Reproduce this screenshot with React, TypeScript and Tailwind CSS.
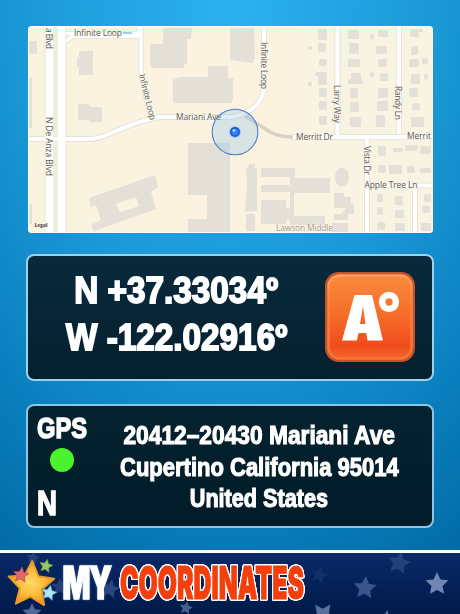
interface StarProps {
  x: number;
  y: number;
  size: number;
  fill: string;
  rotate?: number;
  opacity?: number;
  stroke?: string;
}

const Star = ({ x, y, size, fill, rotate = 0, opacity = 1, stroke }: StarProps) => (
  <path
    d="M0 -10 L2.9 -3.8 L9.5 -3.1 L4.6 1.6 L5.9 8.1 L0 4.9 L-5.9 8.1 L-4.6 1.6 L-9.5 -3.1 L-2.9 -3.8 Z"
    transform={`translate(${x} ${y}) rotate(${rotate}) scale(${size / 10})`}
    fill={fill}
    opacity={opacity}
    stroke={stroke}
    strokeWidth={0.8}
    strokeLinejoin="round"
  />
);

const buildings = [
  "M28 41h9v13h-9z M28 78h4v50h-4z M28 204h4v20h-4z",
  "M79 51h14v24H79v-8h-2v-10h2z",
  "M78 104h10l3 3h11v15h-13v-2H78z",
  "M163 28h29l-1 11h-4v25h-3v4h-32l-2-3V44h13z",
  "M230 28h24l1 30-2 5-23-3z",
  "M208 66h20v12h5v22l-2 3h-56l-2-2V80l6-3h29z",
  "M188 143h42v89h-42v-13h19v-24h-19z",
  "M250 164h5v5h2v42l-12 1 2-28-1-15z M246 214h9v17h-9z",
  "M261 168h34v9h-34z M261 185h34v7h-34z M261 200h25v8h8v12h-8v4h-25z M290 168h4v56h-4z",
  "M290 178h40v15h-40z M290 216h35v9h-35z",
  "M334 193h10v4h7v7h3v10h-6v6h-14v-6h7l5-6h-12z M332 223h16v9h-16z",
];

// small houses, [x, y, w, h]
const houses = [
  [318, 29, 9, 11], [318, 43, 8, 9], [319, 59, 8, 7], [315, 72, 12, 4], [318, 75, 9, 10],
  [319, 88, 8, 9], [319, 101, 8, 9], [319, 116, 8, 9], [308, 46, 4, 4], [308, 82, 4, 4],
  [348, 30, 11, 9], [349, 43, 10, 11], [348, 59, 12, 8], [351, 73, 10, 7], [348, 79, 15, 5],
  [350, 88, 8, 10], [350, 102, 9, 10], [350, 117, 11, 10],
  [378, 30, 10, 7], [376, 46, 11, 8], [378, 59, 9, 8], [378, 88, 10, 10], [377, 101, 11, 10],
  [376, 115, 9, 12], [380, 73, 8, 8], [370, 34, 4, 5], [370, 72, 4, 5],
  [410, 29, 9, 8], [419, 29, 4, 3], [411, 46, 7, 9], [409, 59, 10, 8], [411, 74, 9, 10],
  [409, 88, 9, 9], [412, 103, 8, 7], [411, 117, 13, 10], [422, 58, 6, 6], [424, 74, 4, 5],
  [378, 146, 8, 10], [393, 148, 10, 4], [405, 145, 13, 6], [420, 146, 11, 8],
  [378, 165, 8, 8], [389, 165, 13, 9], [407, 166, 8, 7], [420, 168, 11, 5],
  [377, 194, 6, 8], [395, 196, 8, 9], [377, 207, 6, 8], [395, 210, 9, 8], [377, 222, 8, 8],
  [395, 223, 10, 8], [424, 194, 7, 8], [422, 206, 8, 7], [421, 223, 10, 8],
];

const roads = [
  { d: "M49.500 27V232", w: 8 },
  { d: "M61.500 27V232", w: 8 },
  { d: "M28 139H92Q104 137 118 130Q142 120 160 117H233Q262 110 264 88V27", w: 4 },
  { d: "M66 33.500H139V27 M66 41L72 36.500H139 M141 27V72Q145 98 151 116", w: 3.5 },
  { d: "M337.500 27V135 M399 27V134 M290 137H432", w: 4.5 },
  { d: "M367 137V232 M367 185.500H432 M415 186V232", w: 4 },
];

const MapView = () => (
  <div className="mx-auto mt-[26px] h-[207px] w-[405px] overflow-hidden rounded-[3px] border border-white bg-[#faf3df]">
    <svg
      viewBox="29 27 403 205"
      className="block h-full w-full font-['Open_Sans',sans-serif] text-[8.5px] font-medium"
    >
      <rect x="139" y="27" width="160" height="205" fill="#fbf3df" />
      <path d="M299 27H432V232H299Z" fill="#f9f3e2" />
      <g fill="#e4e0d7">
        {buildings.map((d) => (
          <path key={d} d={d} />
        ))}
        {houses.map(([x, y, w, h]) => (
          <rect key={`${x}-${y}`} x={x} y={y} width={w} height={h} rx="1.5" />
        ))}
        <ellipse cx="342" cy="177" rx="7" ry="9.500" />
        <path
          d="M89 198L155 175L158 187L151 192L156 209L94 231L91 225L101 220L96 205L91 207ZM116 204L120 212L139 206L136 197Z"
          fillRule="evenodd"
        />
      </g>
      <g fill="none">
        {roads.map(({ d, w }) => (
          <path key={d} d={d} stroke="#dfdcd3" strokeWidth={w + 1.4} />
        ))}
        {roads.map(({ d, w }) => (
          <path key={d} d={d} stroke="#ffffff" strokeWidth={w} />
        ))}
        <path d="M55.500 27V132 M55.500 146V232" stroke="#eeedd6" strokeWidth="3" />
        <path d="M245 116Q258 124 270 132Q280 137 293 137" stroke="#d9d1c6" strokeWidth="3.500" />
        <path d="M123 33H132" stroke="#9fd0ec" strokeWidth="2" />
      </g>
      <g fill="#5f5b57" stroke="#faf5e8" strokeWidth="1" paintOrder="stroke">
        <text x="74" y="36" textLength="48">Infinite Loop</text>
        <text x="176" y="120" textLength="45">Mariani Ave</text>
        <text x="296" y="140" textLength="37">Merritt Dr</text>
        <text x="407" y="139" textLength="24">Merrit</text>
        <text x="364.500" y="188" textLength="53">Apple Tree Ln</text>
        <text transform="translate(139 75) rotate(76)" textLength="47">Infinite Loop</text>
        <text transform="translate(261 42) rotate(90)" textLength="47">Infinite Loop</text>
        <text transform="translate(334 85) rotate(90)" textLength="38">Larry Way</text>
        <text transform="translate(395 86) rotate(90)" textLength="34">Randy Ln</text>
        <text transform="translate(364 146) rotate(90)" textLength="29">Vista Dr</text>
        <text transform="translate(46 117) rotate(90)" textLength="59">N De Anza Blvd</text>
        <text transform="translate(46 28) rotate(90)" textLength="21">a Blvd</text>
        <text x="276" y="230.500" textLength="57" fill="#a39d8f">Lawson Middle</text>
        <text x="34.500" y="227" textLength="13" className="text-[6px] font-bold" fill="#4b4843">Legal</text>
      </g>
      <circle cx="235" cy="132" r="22.800" fill="#89c5ee" fillOpacity=".3" stroke="#4a7ed0" strokeWidth="1.100" />
      <circle cx="235" cy="132" r="6" fill="#9ccaf4" />
      <circle cx="235" cy="132" r="5" fill="#1b57d8" />
      <circle cx="235" cy="132" r="3.300" fill="#3183f8" />
      <circle cx="234" cy="130.500" r="1.400" fill="#a6d8ff" />
    </svg>
  </div>
);

const DegreeButton = () => (
  <button className="h-[91px] w-[91px]">
    <svg viewBox="0 0 91 91" className="block h-full w-full">
      <defs>
        <linearGradient id="orange" x1="0" y1="0" x2="0" y2="1">
          <stop offset="0" stopColor="#f98a3d" />
          <stop offset=".45" stopColor="#f66f2a" />
          <stop offset=".85" stopColor="#f04c1c" />
          <stop offset="1" stopColor="#f4682c" />
        </linearGradient>
        <linearGradient id="rim" x1="0" y1="0" x2="0" y2="1">
          <stop offset="0" stopColor="#fd9f62" />
          <stop offset=".3" stopColor="#f78345" />
          <stop offset="1" stopColor="#f8753a" />
        </linearGradient>
      </defs>
      <rect x="0" y="0" width="90" height="90" rx="14" fill="#c5532a" />
      <rect x="3.500" y="3.500" width="83" height="83" rx="11" fill="url(#orange)" stroke="url(#rim)" strokeWidth="2.500" />
      <path d="M17 68.500L29.500 23H47L58 68.500H42.500L41.300 61H33.500L31.800 68.500ZM35 52H40.500L38 34Z" fill="#fff" fillRule="evenodd" />
      <circle cx="64" cy="30" r="6.900" fill="none" stroke="#fff" strokeWidth="6.500" />
    </svg>
  </button>
);

const addressLines = [
  { text: "20412–20430 Mariani Ave", scale: "scale-x-[.91]" },
  { text: "Cupertino California 95014", scale: "scale-x-[.88]" },
  { text: "United States", scale: "scale-x-[.865]" },
];

const Footer = () => (
  <footer className="h-[64px] border-t-[3px] border-white bg-linear-to-b from-[#092a68] to-[#011a4a]">
    <svg
      viewBox="0 553 460 61"
      className="block h-full w-full font-[Inter,sans-serif] text-[45px] font-black"
    >
      <defs>
        <radialGradient id="gold">
          <stop offset="0" stopColor="#ffd968" />
          <stop offset=".6" stopColor="#fdbb3b" />
          <stop offset="1" stopColor="#f3981d" />
        </radialGradient>
      </defs>
      <Star x={33} y={558} size={7} fill="#365188" opacity={0.6} rotate={10} />
      <Star x={60} y={587} size={9} fill="#365188" opacity={0.6} />
      <Star x={32} y={613} size={10} fill="#6a7da9" opacity={0.8} />
      <Star x={110} y={589} size={10} fill="#365188" opacity={0.8} rotate={12} />
      <Star x={186} y={608} size={7} fill="#5c719f" opacity={0.8} rotate={12} />
      <Star x={319} y={575} size={9} fill="#24427e" opacity={0.4} rotate={15} />
      <Star x={399} y={563} size={12} fill="#35528b" opacity={0.6} rotate={12} />
      <Star x={365} y={588} size={12} fill="#49629a" opacity={0.8} rotate={5} />
      <Star x={437} y={584} size={12} fill="#7186b0" />
      <Star x={323} y={615} size={13} fill="#7186b0" opacity={0.8} rotate={35} />
      <Star x={386} y={620} size={10} fill="#7186b0" opacity={0.8} rotate={8} />
      <Star x={31} y={585} size={24} fill="url(#gold)" stroke="#e99a28" rotate={3} />
      <Star x={46} y={566} size={7} fill="#9ac665" stroke="#648e42" rotate={12} />
      <Star x={21} y={575} size={8} fill="#df6970" stroke="#b64357" rotate={8} />
      <Star x={49} y={593} size={8} fill="#ade6f3" stroke="#4e9fbe" rotate={12} />
      <text
        x="62.500"
        y="599"
        textLength="48"
        lengthAdjust="spacingAndGlyphs"
        fill="#fff"
        stroke="#fff"
        strokeWidth="1.500"
        className="tracking-[-2px] [filter:drop-shadow(0_0_1px_#49679e)]"
      >
        MY
      </text>
      <text
        x="120"
        y="599"
        textLength="184"
        lengthAdjust="spacingAndGlyphs"
        fill="#f33f0b"
        stroke="#f33f0b"
        strokeWidth="1"
        className="[filter:drop-shadow(1px_0_0_#fff)_drop-shadow(-1px_0_0_#fff)_drop-shadow(0_1px_0_#fff)_drop-shadow(0_-1px_0_#fff)_drop-shadow(0_0_.7px_#fff)]"
      >
        COORDINATES
      </text>
    </svg>
  </footer>
);

const App = () => {
  return (
    <div className="flex h-[614px] w-[460px] flex-col overflow-hidden bg-[radial-gradient(ellipse_440px_660px_at_50%_0%,#2cb1f0_0%,#1c9ad8_45%,#0b80bf_75%,#006aa3_100%)] font-['Liberation_Sans',Arial,sans-serif] font-bold text-white">
      <MapView />
      <section className="mx-auto mt-[21px] flex h-[127px] w-[408px] items-center rounded-[8px] border-2 border-[#9fcfeb] bg-linear-to-b from-[#082a3c] to-[#05202e]">
        <div className="-mt-[7px] flex w-[297px] flex-col items-center whitespace-nowrap text-[36px] leading-[47px] [-webkit-text-stroke:1.8px_white]">
          <span className="scale-x-[.925]">N +37.33034º</span>
          <span className="scale-x-[.925]">W -122.02916º</span>
        </div>
        <DegreeButton />
      </section>
      <section className="mx-auto mt-[23px] flex h-[124px] w-[408px] rounded-[8px] border-2 border-[#8fc5e4] bg-linear-to-b from-[#05222f] to-[#021c29]">
        <div className="flex w-[62px] shrink-0 flex-col items-start pl-[9px] [-webkit-text-stroke:1.6px_white]">
          <span className="mt-[3px] origin-left scale-x-[.79] text-[30px] leading-[38px]">GPS</span>
          <span className="ml-[13px] mt-px h-6 w-6 rounded-full bg-[#4bf32d]" />
          <span className="mt-[11px] origin-left scale-x-[.79] text-[35px] leading-[40px]">N</span>
        </div>
        <div className="flex w-[338px] flex-col items-center whitespace-nowrap pt-[14px] text-[25px] leading-[31.500px] [-webkit-text-stroke:1.1px_white]">
          {addressLines.map(({ text, scale }) => (
            <span key={text} className={scale}>
              {text}
            </span>
          ))}
        </div>
      </section>
      <div className="grow" />
      <Footer />
    </div>
  );
};

export default App;
